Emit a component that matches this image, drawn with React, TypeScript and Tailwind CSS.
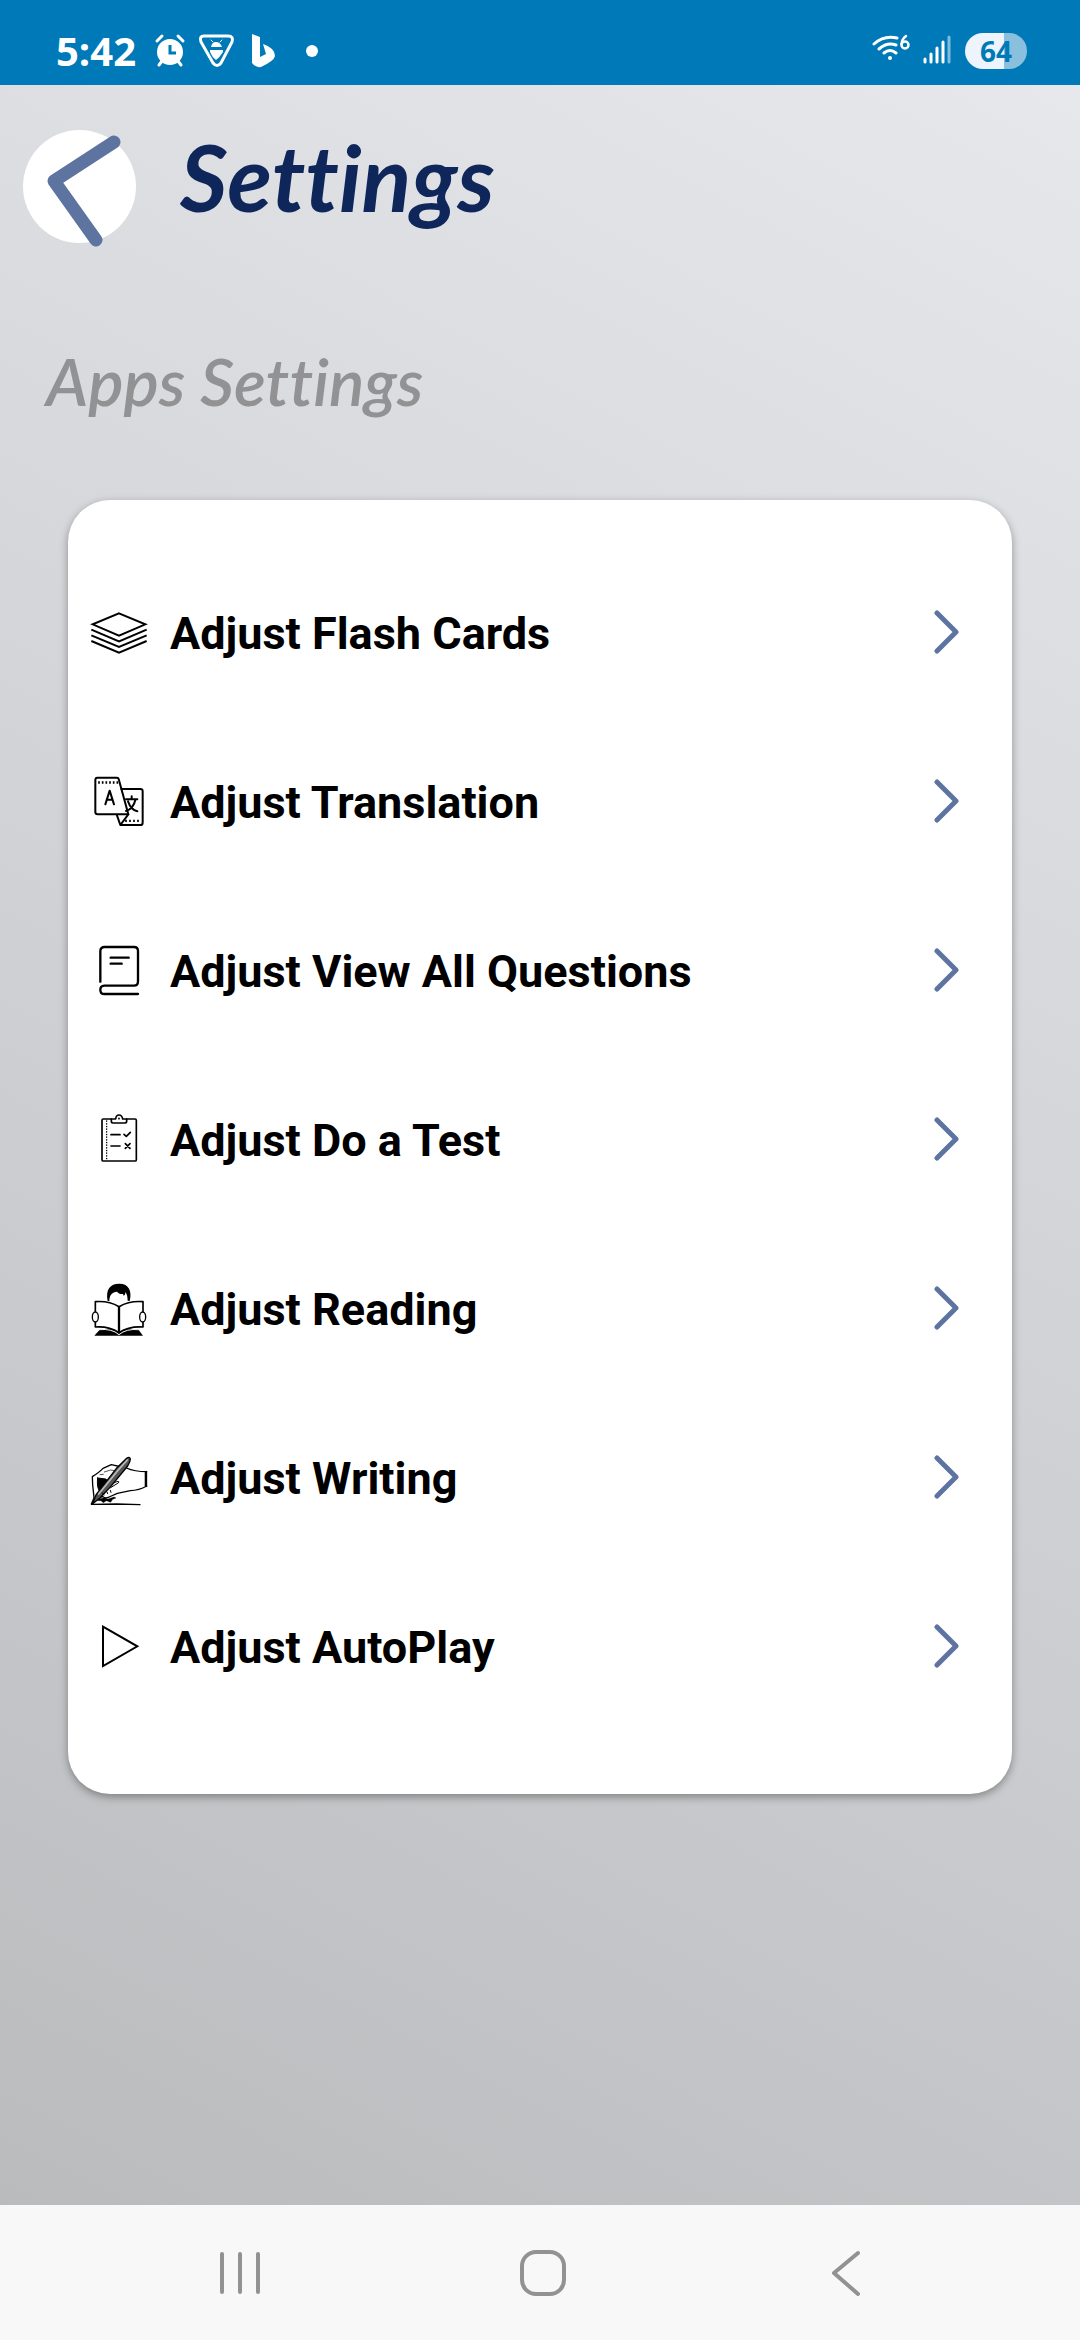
import type { ReactNode } from "react"

type Item = { label: string; icon: ReactNode }

const iconClass = "h-20 w-20 shrink-0"
const line = {
  fill: "none",
  stroke: "#000",
  strokeLinecap: "round",
  strokeLinejoin: "round",
} as const

function CardsIcon() {
  return (
    <svg viewBox="0 0 240 240" className={iconClass} {...line} strokeWidth="6" strokeLinecap="butt" strokeLinejoin="miter" aria-hidden="true">
      <path d="M117 58 196 91 117 125 38 91Z" />
      <path d="M34 107 117 142 200 107M34 124 117 159 200 124M34 141 117 176 200 141" />
    </svg>
  )
}

function TranslateIcon() {
  return (
    <svg viewBox="0 7 240 240" className={iconClass} {...line} strokeWidth="6" aria-hidden="true">
      <path d="M52 51H111Q115 51 116 55L145 161H53Q46 161 46 154V58Q46 51 52 51Z" />
      <path d="M124 85H181Q188 85 188 92V186Q188 193 181 193H121L111 164M121 193 145 161" />
      <path d="M76 131 89 90 102 131M80 117H98" />
      <path d="M138 116H172M155 107V116M166 118C162 136 151 147 138 151M144 122C150 139 159 149 172 152" />
      <path d="M57 62V69M68 62V69M79 62V69M90 62V69M101 62V69M112 62V69M138 177V184M150 177V184M162 177V184M174 177V184" strokeWidth="5" strokeLinecap="butt" />
    </svg>
  )
}

function BookIcon() {
  return (
    <svg viewBox="0 4 240 240" className={iconClass} {...line} strokeWidth="7" aria-hidden="true">
      <path d="M61 153V62Q61 49 74 49H162Q174 49 174 61V152Q174 165 162 165H73Q61 166 61 177Q61 190 73 190H174" />
      <path d="M92 81H146M92 99H125" />
    </svg>
  )
}

function TestIcon() {
  return (
    <svg viewBox="0 1 240 240" className={iconClass} {...line} strokeWidth="5" aria-hidden="true">
      <path d="M94 55H70Q66 55 66 59V177Q66 181 70 181H165Q169 181 169 177V59Q169 55 165 55H140" />
      <path d="M94 55H107Q108 43 117 43T128 55H140V62Q140 67 135 67H99Q94 67 94 62Z" />
      <path d="M117 53V54" />
      <path d="M80 61V178" strokeWidth="4" strokeDasharray="1 7" />
      <path d="M93 102H120M93 136H120" />
      <path d="M132 101 139 107 151 95M136 129 150 143M150 129 136 143" />
    </svg>
  )
}

function ReadingIcon() {
  return (
    <svg viewBox="0 -1 240 240" className={iconClass} {...line} strokeWidth="5" aria-hidden="true">
      <path d="M83 92C76 57 91 40 117 40 146 39 157 62 149 92L143 91C143 75 139 68 135 65 137 70 136 73 131 76L129 71C119 72 116 68 111 64 97 65 88 73 88 92Z" fill="#000" stroke="none" />
      <path d="M61 176H174L189 196H43Z" fill="#000" stroke="none" />
      <path d="M46 94Q87 91 117 109Q148 91 189 94V170Q148 167 117 187Q87 167 46 170Z" fill="#fff" />
      <path d="M58 178Q96 174 117 193Q139 174 176 178" stroke="#fff" strokeWidth="3" />
      <path d="M117 109V185" strokeWidth="7" strokeLinecap="butt" />
      <ellipse cx="46" cy="140" rx="9" ry="15" fill="#fff" strokeWidth="4" />
      <ellipse cx="188" cy="140" rx="9" ry="15" fill="#fff" strokeWidth="4" />
    </svg>
  )
}

function WritingIcon() {
  return (
    <svg viewBox="0 -4 240 240" className={iconClass} {...line} strokeWidth="4" aria-hidden="true">
      <path d="M42 171 38 134 37 109Q60 94 69 84L94 73 125 80" />
      <path d="M139 83Q164 94 200 94M200 137Q177 150 151 151L112 159 94 167Q76 177 69 169Q57 171 53 160" />
      <path d="M195 93H201V140L195 137Z" fill="#000" strokeWidth="1" />
      <path d="M53 113 77 116Q84 118 77 128L57 150Q50 137 53 113Z" fill="#000" strokeWidth="3" />
      <path d="M56 176 74 172 84 176 102 170 108 173 98 177 92 186 79 181 70 187 63 181 54 181Z" fill="#000" strokeWidth="1" />
      <path d="M37 191 49 162 111 82 140 54Q149 47 151 56Q151 64 143 77L92 139 60 173Z" fill="#555" />
      <path d="M56 161 113 91 142 59" stroke="#bbb" strokeWidth="5" />
      <path d="M103 127Q119 119 116 127L92 142M67 157 72 164M81 155 83 160M91 150 93 156" strokeWidth="3" />
      <path d="M42 173 34 191M34 192 110 191 180 193" />
      <path d="M73 95 92 89 103 91M60 103 70 102" strokeWidth="2" />
    </svg>
  )
}

function PlayIcon() {
  return (
    <svg viewBox="0 0 240 240" className={iconClass} {...line} strokeWidth="6" strokeLinejoin="miter" aria-hidden="true">
      <path d="M69 56 172 115 69 174Z" />
    </svg>
  )
}

const items: Item[] = [
  { label: "Adjust Flash Cards", icon: <CardsIcon /> },
  { label: "Adjust Translation", icon: <TranslateIcon /> },
  { label: "Adjust View All Questions", icon: <BookIcon /> },
  { label: "Adjust Do a Test", icon: <TestIcon /> },
  { label: "Adjust Reading", icon: <ReadingIcon /> },
  { label: "Adjust Writing", icon: <WritingIcon /> },
  { label: "Adjust AutoPlay", icon: <PlayIcon /> },
]

function StatusBar() {
  return (
    <div className="flex h-[85px] items-center justify-between bg-[#0079b8] pl-14 pr-[53px] pt-4 text-white">
      <div className="flex items-center">
        <span className="w-[98px] font-['Open_Sans','Noto_Sans',sans-serif] text-[40px] font-bold leading-10">5:42</span>
        <svg viewBox="0 0 124 36" className="h-9 w-[124px]" fill="none" stroke="#fff" strokeLinecap="round" aria-hidden="true">
          {/* alarm */}
          <circle cx="16" cy="19" r="13" fill="#fff" stroke="none" />
          <path d="M3 8 8 3M29 8 24 3M5 32 8 28M27 32 24 28" strokeWidth="3" />
          <path d="M16 12V20H22" stroke="#0079b8" strokeWidth="3" strokeLinecap="butt" />
          {/* shield */}
          <path d="M50 3H74Q80 3 78 9L67 30Q63 35 59 30L47 9Q45 3 50 3Z" strokeWidth="3" />
          <path d="M57 14Q58 9 62 9T68 14ZM56 17H69V19Q66 24 62 27Q58 24 56 19Z" fill="#fff" stroke="none" />
          <path d="M59 9 57 7M66 9 68 7" strokeWidth="1" />
          {/* bing */}
          <path d="M98 1 106 4V24L112 21 109 11Q121 15 121 23Q120 28 107 34Q102 35 98 30Z" fill="#fff" stroke="none" />
        </svg>
        <span className="ml-7 h-3 w-3 rounded-full bg-white" />
      </div>
      <div className="flex items-center">
        <svg viewBox="0 0 80 36" className="h-9 w-20" fill="none" stroke="#fff" strokeLinecap="round" aria-hidden="true">
          <path d="M2 11Q12 2 25 5M7 16Q15 9 24 12M12 20Q18 15 24 20" strokeWidth="3" />
          <circle cx="18" cy="25" r="2" fill="#fff" stroke="none" />
          <circle cx="33" cy="12" r="3.5" strokeWidth="2.5" />
          <path d="M29.5 11Q30 6 34 3" strokeWidth="2.5" />
          <path d="M53 26V29M59 21V29M65 15V29M71 9V29" strokeWidth="3" />
          <path d="M77 4V29" strokeWidth="3" opacity="0.5" />
        </svg>
        <span className="ml-[13px] flex h-9 w-[62px] items-center justify-center rounded-full bg-[linear-gradient(to_right,#edf4fb_63%,#8bbfde_63%)] font-['Open_Sans','Noto_Sans',sans-serif] text-[28px] font-bold leading-9 text-[#0079b8]">
          64
        </span>
      </div>
    </div>
  )
}

function NavBar() {
  return (
    <nav className="grid h-[135px] grid-cols-3 items-center bg-[#f8f8f8] pl-[90px] pr-[84px]">
      <button type="button" aria-label="Recent apps" className="mx-auto">
        <svg viewBox="0 0 48 48" className="h-12 w-12" stroke="#929292" strokeWidth="4" strokeLinecap="round">
          <path d="M5 5V43M23 5V43M41 5V43" />
        </svg>
      </button>
      <button type="button" aria-label="Home" className="mx-auto">
        <svg viewBox="0 0 48 48" className="h-12 w-12" fill="none" stroke="#929292" strokeWidth="4">
          <rect x="3" y="3" width="42" height="42" rx="14" />
        </svg>
      </button>
      <button type="button" aria-label="Back" className="mx-auto">
        <svg viewBox="0 0 48 48" className="h-12 w-12" fill="none" stroke="#929292" strokeWidth="4" strokeLinecap="round" strokeLinejoin="round">
          <path d="M37 4 13 24 37 45" />
        </svg>
      </button>
    </nav>
  )
}

export default function App() {
  return (
    <div className="flex min-h-screen flex-col bg-[linear-gradient(208deg,#e8e9ed,#b8b9bb)]">
      <StatusBar />

      <main className="flex-1 pb-12">
        <header className="flex items-center pl-[23px] pt-[45px]">
          <button type="button" aria-label="Go back" className="rounded-full bg-white">
            <svg viewBox="0 0 113 113" className="h-[113px] w-[113px] overflow-visible" fill="none" stroke="#5d73a0" strokeWidth="13" strokeLinecap="round" strokeLinejoin="round">
              <path d="M91 12 31 51 73 110" />
            </svg>
          </button>
          <h1 className="ml-11 pb-5 font-['Lato',sans-serif] text-[92px] font-bold italic leading-[92px] text-[#0e265a] [font-variant-ligatures:none]">
            Settings
          </h1>
        </header>

        <h2 className="ml-[46px] mt-[98px] font-['Lato',sans-serif] text-[66px] font-semibold italic leading-[80px] text-[#929294] [font-variant-ligatures:none]">
          Apps Settings
        </h2>

        <ul className="mx-[68px] mt-[79px] rounded-[42px] bg-white pb-[62px] pt-[49px] shadow-[0_3px_8px_rgba(0,0,0,0.35)]">
          {items.map((item) => (
            <li key={item.label}>
              <button type="button" className="flex h-[169px] w-full items-center gap-[10px] pl-3 pr-[50px] text-left">
                {item.icon}
                <span className="flex-1 font-['Roboto',sans-serif] text-[45px] font-bold leading-[56px] text-black">{item.label}</span>
                <svg viewBox="0 0 32 48" className="h-12 w-8 shrink-0" fill="none" stroke="#5d73a0" strokeWidth="5" strokeLinecap="round" strokeLinejoin="round" aria-hidden="true">
                  <path d="M7 3 26 22 7 41" />
                </svg>
              </button>
            </li>
          ))}
        </ul>
      </main>

      <NavBar />
    </div>
  )
}
